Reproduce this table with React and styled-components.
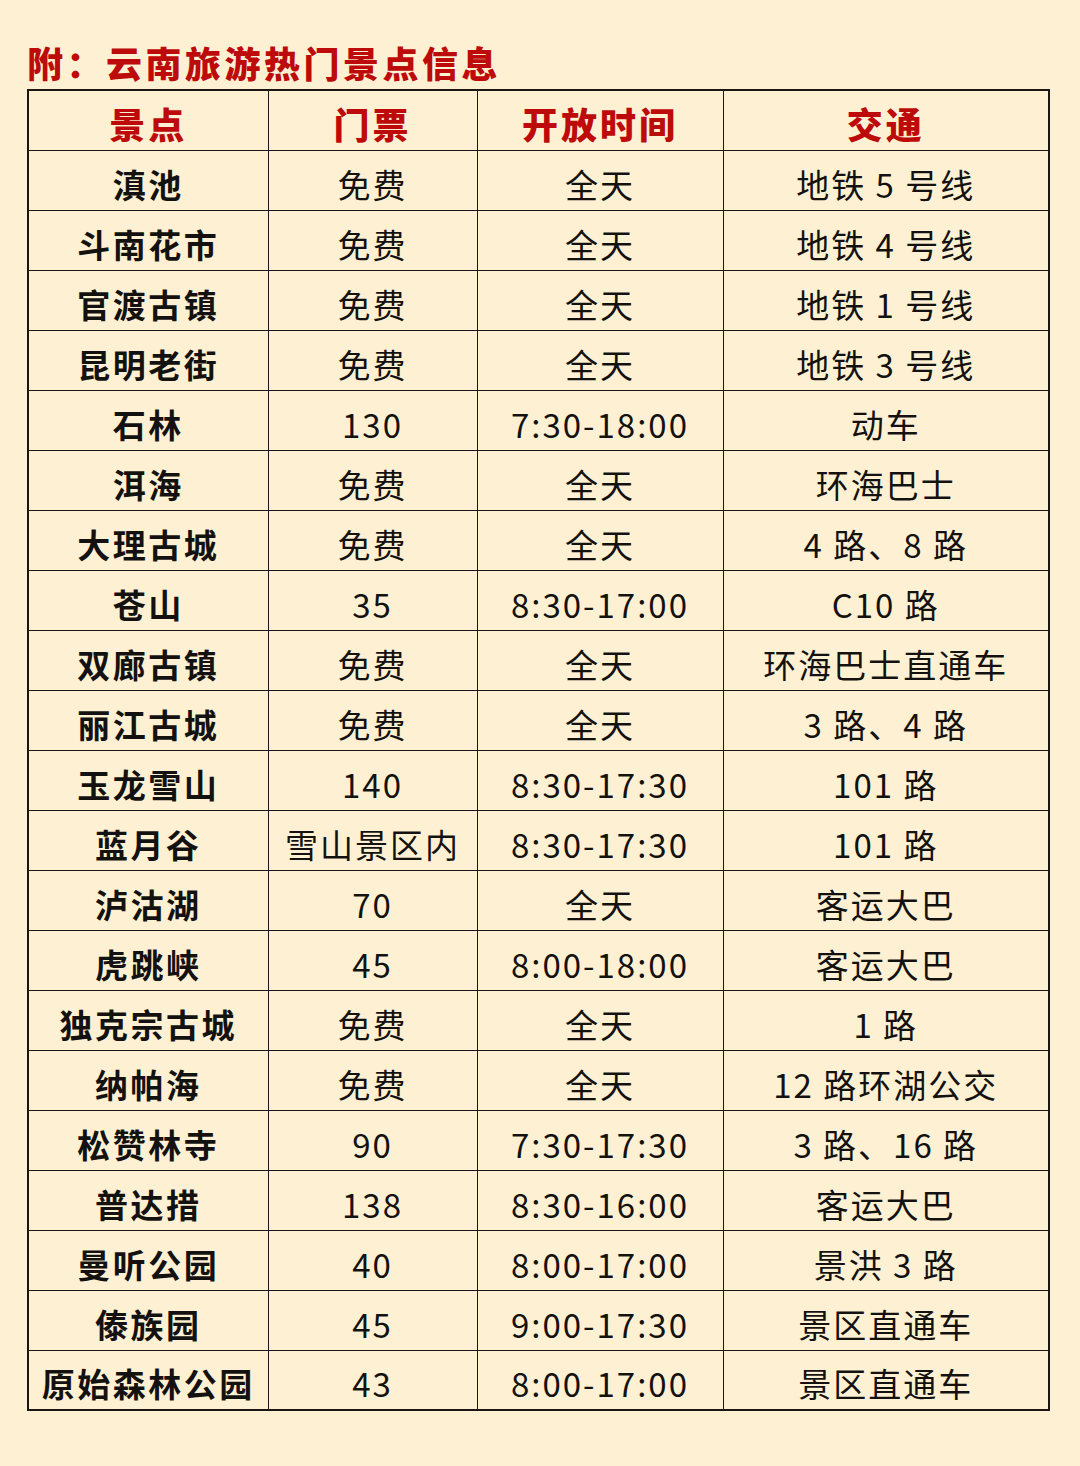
import React from "react";
import styled, { createGlobalStyle } from "styled-components";

const GlobalStyle = createGlobalStyle`
  html, body {
    margin: 0;
    padding: 0;
    background: #fef1d3;
  }
  body {
    font-family: "Noto Sans CJK SC", "Noto Sans", sans-serif;
  }
`;

const Page = styled.div`
  width: 1080px;
  height: 1466px;
  background: #fef1d3;
  padding: 42px 0 0 27px;
  box-sizing: border-box;
`;

const Title = styled.h1`
  margin: 0 0 7px 0;
  font-size: 36px;
  line-height: 40px;
  font-weight: 900;
  letter-spacing: 3.5px;
  color: #bd0a0a;
`;

const Table = styled.table`
  border-collapse: collapse;
  border: 2.5px solid #1b1612;
  table-layout: fixed;
  width: 1021px;
`;

const Col = styled.col`
  width: ${(p) => p.w}px;
`;

const Cell = styled.td`
  border: 1.5px solid #1b1612;
  height: 60px;
  padding: 7px 0 0 0;
  box-sizing: border-box;
  text-align: center;
  vertical-align: middle;
  white-space: nowrap;
  font-size: 33px;
  line-height: 40px;
  color: #141210;
  font-weight: ${(p) => (p.bold ? 700 : 400)};
  letter-spacing: ${(p) => (p.bold ? "2.5px" : "2px")};
`;

const HeadCell = styled.th`
  border: 1.5px solid #1b1612;
  height: 60px;
  padding: 5px 0 0 0;
  box-sizing: border-box;
  text-align: center;
  font-size: 36px;
  line-height: 40px;
  font-weight: 900;
  letter-spacing: 3px;
  color: #bd0a0a;
`;

const rows = [
  ["滇池", "免费", "全天", "地铁 5 号线"],
  ["斗南花市", "免费", "全天", "地铁 4 号线"],
  ["官渡古镇", "免费", "全天", "地铁 1 号线"],
  ["昆明老街", "免费", "全天", "地铁 3 号线"],
  ["石林", "130", "7:30-18:00", "动车"],
  ["洱海", "免费", "全天", "环海巴士"],
  ["大理古城", "免费", "全天", "4 路、8 路"],
  ["苍山", "35", "8:30-17:00", "C10 路"],
  ["双廊古镇", "免费", "全天", "环海巴士直通车"],
  ["丽江古城", "免费", "全天", "3 路、4 路"],
  ["玉龙雪山", "140", "8:30-17:30", "101 路"],
  ["蓝月谷", "雪山景区内", "8:30-17:30", "101 路"],
  ["泸沽湖", "70", "全天", "客运大巴"],
  ["虎跳峡", "45", "8:00-18:00", "客运大巴"],
  ["独克宗古城", "免费", "全天", "1 路"],
  ["纳帕海", "免费", "全天", "12 路环湖公交"],
  ["松赞林寺", "90", "7:30-17:30", "3 路、16 路"],
  ["普达措", "138", "8:30-16:00", "客运大巴"],
  ["曼听公园", "40", "8:00-17:00", "景洪 3 路"],
  ["傣族园", "45", "9:00-17:30", "景区直通车"],
  ["原始森林公园", "43", "8:00-17:00", "景区直通车"],
];

const App = () => {
  return (
    <Page>
      <GlobalStyle />
      <Title>附：云南旅游热门景点信息</Title>
      <Table>
        <colgroup>
          <Col w={240} />
          <Col w={209} />
          <Col w={246} />
          <Col w={326} />
        </colgroup>
        <thead>
          <tr>
            <HeadCell>景点</HeadCell>
            <HeadCell>门票</HeadCell>
            <HeadCell>开放时间</HeadCell>
            <HeadCell>交通</HeadCell>
          </tr>
        </thead>
        <tbody>
          {rows.map((r) => (
            <tr key={r[0]}>
              <Cell bold>{r[0]}</Cell>
              <Cell>{r[1]}</Cell>
              <Cell>{r[2]}</Cell>
              <Cell>{r[3]}</Cell>
            </tr>
          ))}
        </tbody>
      </Table>
    </Page>
  );
};

export default App;
